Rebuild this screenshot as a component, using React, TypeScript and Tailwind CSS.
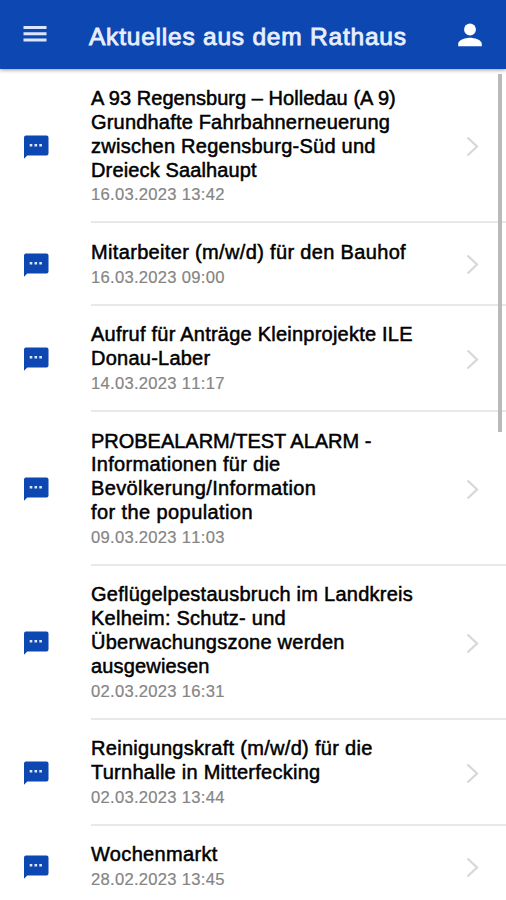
const news = [
  {
    lines: [
      { text: "A 93 Regensburg – Holledau (A 9)", spacing: "tracking-[0.04px]" },
      { text: "Grundhafte Fahrbahnerneuerung", spacing: "tracking-[0.19px]" },
      { text: "zwischen Regensburg-Süd und", spacing: "tracking-[0.25px]" },
      { text: "Dreieck Saalhaupt", spacing: "tracking-[0.14px]" },
    ],
    date: "16.03.2023 13:42",
  },
  {
    lines: [{ text: "Mitarbeiter (m/w/d) für den Bauhof", spacing: "tracking-[0.34px]" }],
    date: "16.03.2023 09:00",
  },
  {
    lines: [
      { text: "Aufruf für Anträge Kleinprojekte ILE", spacing: "tracking-[0.23px]" },
      { text: "Donau-Laber", spacing: "tracking-[0.24px]" },
    ],
    date: "14.03.2023 11:17",
  },
  {
    lines: [
      { text: "PROBEALARM/TEST ALARM -", spacing: "tracking-[-0.02px]" },
      { text: "Informationen für die", spacing: "tracking-[0.29px]" },
      { text: "Bevölkerung/Information", spacing: "tracking-[0.37px]" },
      { text: "for the population", spacing: "tracking-[0.41px]" },
    ],
    date: "09.03.2023 11:03",
  },
  {
    lines: [
      { text: "Geflügelpestausbruch im Landkreis", spacing: "tracking-[0.26px]" },
      { text: "Kelheim: Schutz- und", spacing: "tracking-[0.24px]" },
      { text: "Überwachungszone werden", spacing: "tracking-[0.25px]" },
      { text: "ausgewiesen", spacing: "tracking-[0.16px]" },
    ],
    date: "02.03.2023 16:31",
  },
  {
    lines: [
      { text: "Reinigungskraft (m/w/d) für die", spacing: "tracking-[0.3px]" },
      { text: "Turnhalle in Mitterfecking", spacing: "tracking-[0.26px]" },
    ],
    date: "02.03.2023 13:44",
  },
  {
    lines: [{ text: "Wochenmarkt", spacing: "tracking-[0.33px]" }],
    date: "28.02.2023 13:45",
  },
];

const MessageIcon = () => (
  <svg className="ml-[23px] h-6 w-[26px] shrink-0" viewBox="0 0 26 24">
    <path
      d="M3 .5h20.500a2 2 0 0 1 2 2v16a2 2 0 0 1-2 2H4.300L1 23.700V2.500a2 2 0 0 1 2-2z"
      fill="#0d47b1"
    />
    <path d="M6.700 9h2.600v2.500H6.700zM11.500 9h2.600v2.500h-2.600zM16.300 9h2.600v2.500h-2.600z" fill="#dfe8fa" />
  </svg>
);

const Header = () => (
  <header className="relative z-10 flex h-[69px] shrink-0 items-center bg-[#0d47b1] pt-[3px] text-white shadow-[0_1px_4px_rgba(0,0,0,0.4)]">
    <button className="ml-[23px] mb-[4px]" aria-label="Menü">
      <svg className="h-[18px] w-6" viewBox="0 0 24 18">
        <path d="M.5 1h23v3H.5zM.5 7.300h23v3H.5zM.5 13.600h23v3H.5z" fill="#dbe5fb" />
      </svg>
    </button>
    <h1 className="ml-[42px] mt-[3px] grow whitespace-nowrap text-[24.5px] tracking-[0.78px] [-webkit-text-stroke:0.9px_#e8eeff] text-[#e8eeff]">
      Aktuelles aus dem Rathaus
    </h1>
    <button className="mr-6 mb-[3px]" aria-label="Profil">
      <svg className="h-6 w-6" viewBox="0 0 24 24" fill="white">
        <circle cx="12" cy="6.500" r="5.900" />
        <path d="M.2 23.300v-2.600c0-4 7.800-6 11.800-6s11.800 2 11.800 6v2.600z" />
      </svg>
    </button>
  </header>
);

export default function App() {
  return (
    <div className="relative flex h-[900px] w-[506px] flex-col overflow-hidden bg-white font-['Liberation_Sans',Arial,sans-serif]">
      <Header />
      <main className="pt-[0.7px]">
        {news.map((item) => (
          <a key={item.date} href="#" className="flex items-center">
            <MessageIcon />
            <div className="ml-[42px] flex grow items-center border-b-2 border-[#e8e8e8] pt-[17.6px] pb-[14px]">
              <div className="grow">
                {item.lines.map((line) => (
                  <p
                    key={line.text}
                    className={`h-[23.8px] whitespace-nowrap text-[20px] leading-[23.8px] text-black [-webkit-text-stroke:0.5px_black] ${line.spacing}`}
                  >
                    {line.text}
                  </p>
                ))}
                <p className="pt-px text-[16.6px] leading-6 tracking-[0.28px] text-[#858585] [-webkit-text-stroke:0.2px_#858585] [font-kerning:none]">
                  {item.date}
                </p>
              </div>
              <svg className="mr-[27px] h-5 w-[13px]" viewBox="0 0 13 20" fill="none">
                <path d="M1.500 .5 11 9.500l-9.500 9" stroke="#d8d8d8" strokeWidth="2.300" />
              </svg>
            </div>
          </a>
        ))}
      </main>
      <div className="absolute top-[74px] right-1 h-[358px] w-[4px] bg-[#b9b9b9]" />
    </div>
  );
}
